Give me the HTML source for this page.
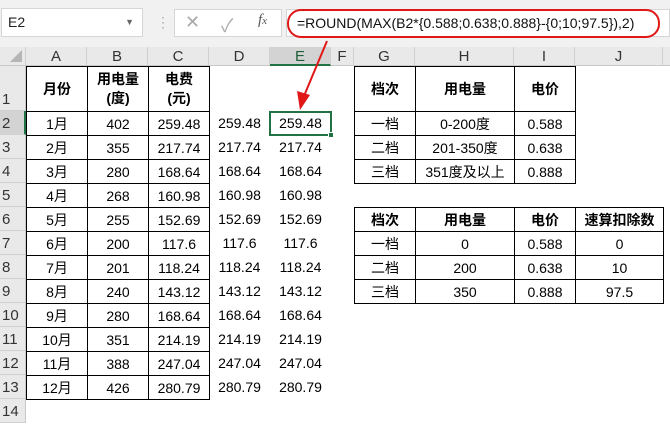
<!DOCTYPE html>
<html><head><meta charset="utf-8"><style>
*{margin:0;padding:0;box-sizing:border-box}
body{width:670px;height:422px;overflow:hidden;background:#fff;font-family:"Liberation Sans","Noto Sans CJK SC",sans-serif;position:relative;color:#000}
.a{position:absolute}
.ch{position:absolute;top:47px;height:19px;background:#e9e9e9;border-right:1px solid #d0d0d0;border-bottom:1px solid #c8c8c8;text-align:center;font-size:15px;line-height:19px;color:#333}
.rh{position:absolute;left:0;width:26px;background:#e9e9e9;border-bottom:1px solid #d0d0d0;border-right:1px solid #c8c8c8;font-size:15px;color:#333;text-align:left;padding-left:2px}
table{position:absolute;border-collapse:collapse;table-layout:fixed;font-size:14px}
td{border:1px solid #000;text-align:center;padding:0;height:24px;line-height:22px;white-space:nowrap;overflow:hidden}
.b{font-weight:bold}
.v{position:absolute;width:61px;text-align:center;font-size:14px;line-height:24px}
</style></head><body>
<div class="a" style="left:0;top:0;width:670px;height:47px;background:#f1f1f1"></div>
<div class="a" style="left:1px;top:8px;width:142px;height:29px;background:#fff;border:1px solid #d6d6d6;font-size:14px;line-height:27px;padding-left:6px;color:#222">E2<span style="position:absolute;right:8px;top:0;font-size:9px;color:#666">▼</span></div>
<div class="a" style="left:156px;top:14px;color:#aaa;font-size:14px;line-height:16px">⋮</div>
<div class="a" style="left:174px;top:9px;width:108px;height:28px;background:#fff;border:1px solid #d6d6d6"></div>
<div class="a" style="left:185px;top:12px;color:#aaa;font-size:18px">✕</div>
<div class="a" style="left:221px;top:12px;color:#aaa;font-size:18px">✓</div>
<div class="a" style="left:258px;top:12px;color:#555;font-size:15px;font-style:italic;font-family:'Liberation Serif',serif">f<span style="font-size:11px">x</span></div>
<div class="a" style="left:286px;top:9px;width:384px;height:28px;background:#fff;border:1px solid #d6d6d6"></div>
<div class="a" style="left:287px;top:9px;width:373px;height:29px;border:2px solid #e01818;border-radius:14px"></div>
<div class="a" style="left:297px;top:11px;font-size:14px;line-height:24px;color:#111">=ROUND(MAX(B2*{0.588;0.638;0.888}-{0;10;97.5}),2)</div>

<div class="ch" style="left:0;width:26px;background:#e9e9e9"><svg width="12" height="12" style="position:absolute;right:3px;bottom:3px"><path d="M12 0L12 12L0 12Z" fill="#b5b5b5"/></svg></div>
<div class="ch" style="left:26px;width:61px">A</div>
<div class="ch" style="left:87px;width:61px">B</div>
<div class="ch" style="left:148px;width:61px">C</div>
<div class="ch" style="left:209px;width:61px">D</div>
<div class="ch" style="left:270px;width:61px;background:#d3d3d3;border-bottom:2px solid #217346;color:#1d5e38">E</div>
<div class="ch" style="left:331px;width:23px">F</div>
<div class="ch" style="left:354px;width:61px">G</div>
<div class="ch" style="left:415px;width:99px">H</div>
<div class="ch" style="left:514px;width:61px">I</div>
<div class="ch" style="left:575px;width:88px">J</div>
<div class="ch" style="left:663px;width:10px"></div>

<div class="rh" style="top:66px;height:45px;line-height:68px">1</div>
<div class="rh" style="top:111px;height:24px;line-height:26px;background:#d3d3d3;border-right:2px solid #217346">2</div>
<div class="rh" style="top:135px;height:24px;line-height:26px">3</div>
<div class="rh" style="top:159px;height:24px;line-height:26px">4</div>
<div class="rh" style="top:183px;height:24px;line-height:26px">5</div>
<div class="rh" style="top:207px;height:24px;line-height:26px">6</div>
<div class="rh" style="top:231px;height:24px;line-height:26px">7</div>
<div class="rh" style="top:255px;height:24px;line-height:26px">8</div>
<div class="rh" style="top:279px;height:24px;line-height:26px">9</div>
<div class="rh" style="top:303px;height:24px;line-height:26px">10</div>
<div class="rh" style="top:327px;height:24px;line-height:26px">11</div>
<div class="rh" style="top:351px;height:24px;line-height:26px">12</div>
<div class="rh" style="top:375px;height:24px;line-height:26px">13</div>
<div class="rh" style="top:399px;height:24px;line-height:26px">14</div>

<table style="left:26px;top:66px;width:183px">
<col style="width:61px"><col style="width:61px"><col style="width:61px">
<tr><td class="b" style="height:45px;line-height:19px">月份</td><td class="b" style="height:45px;line-height:19px">用电量<br>(度)</td><td class="b" style="height:45px;line-height:19px">电费<br>(元)</td></tr>
<tr><td>1月</td><td>402</td><td>259.48</td></tr>
<tr><td>2月</td><td>355</td><td>217.74</td></tr>
<tr><td>3月</td><td>280</td><td>168.64</td></tr>
<tr><td>4月</td><td>268</td><td>160.98</td></tr>
<tr><td>5月</td><td>255</td><td>152.69</td></tr>
<tr><td>6月</td><td>200</td><td>117.6</td></tr>
<tr><td>7月</td><td>201</td><td>118.24</td></tr>
<tr><td>8月</td><td>240</td><td>143.12</td></tr>
<tr><td>9月</td><td>280</td><td>168.64</td></tr>
<tr><td>10月</td><td>351</td><td>214.19</td></tr>
<tr><td>11月</td><td>388</td><td>247.04</td></tr>
<tr><td>12月</td><td>426</td><td>280.79</td></tr>
</table>

<div class="a" style="left:209px;top:111px">
<div class="v" style="left:0;top:0">259.48</div><div class="v" style="left:61px;top:0">259.48</div>
<div class="v" style="left:0;top:24px">217.74</div><div class="v" style="left:61px;top:24px">217.74</div>
<div class="v" style="left:0;top:48px">168.64</div><div class="v" style="left:61px;top:48px">168.64</div>
<div class="v" style="left:0;top:72px">160.98</div><div class="v" style="left:61px;top:72px">160.98</div>
<div class="v" style="left:0;top:96px">152.69</div><div class="v" style="left:61px;top:96px">152.69</div>
<div class="v" style="left:0;top:120px">117.6</div><div class="v" style="left:61px;top:120px">117.6</div>
<div class="v" style="left:0;top:144px">118.24</div><div class="v" style="left:61px;top:144px">118.24</div>
<div class="v" style="left:0;top:168px">143.12</div><div class="v" style="left:61px;top:168px">143.12</div>
<div class="v" style="left:0;top:192px">168.64</div><div class="v" style="left:61px;top:192px">168.64</div>
<div class="v" style="left:0;top:216px">214.19</div><div class="v" style="left:61px;top:216px">214.19</div>
<div class="v" style="left:0;top:240px">247.04</div><div class="v" style="left:61px;top:240px">247.04</div>
<div class="v" style="left:0;top:264px">280.79</div><div class="v" style="left:61px;top:264px">280.79</div>
</div>
<div class="a" style="left:269px;top:111px;width:63px;height:25px;border:2px solid #217346"></div>
<div class="a" style="left:328px;top:132px;width:6px;height:6px;background:#217346;border:1px solid #fff"></div>

<table style="left:354px;top:66px;width:221px">
<col style="width:61px"><col style="width:99px"><col style="width:61px">
<tr><td class="b" style="height:45px">档次</td><td class="b" style="height:45px">用电量</td><td class="b" style="height:45px">电价</td></tr>
<tr><td>一档</td><td>0-200度</td><td>0.588</td></tr>
<tr><td>二档</td><td>201-350度</td><td>0.638</td></tr>
<tr><td>三档</td><td>351度及以上</td><td>0.888</td></tr>
</table>

<table style="left:354px;top:207px;width:309px">
<col style="width:61px"><col style="width:99px"><col style="width:61px"><col style="width:88px">
<tr><td class="b">档次</td><td class="b">用电量</td><td class="b">电价</td><td class="b">速算扣除数</td></tr>
<tr><td>一档</td><td>0</td><td>0.588</td><td>0</td></tr>
<tr><td>二档</td><td>200</td><td>0.638</td><td>10</td></tr>
<tr><td>三档</td><td>350</td><td>0.888</td><td>97.5</td></tr>
</table>

<svg class="a" style="left:0;top:0" width="670" height="422">
<line x1="327" y1="41" x2="304" y2="96" stroke="#e01818" stroke-width="2"/>
<path d="M297 91L310 95L300 110Z" fill="#e01818"/>
</svg>
</body></html>
